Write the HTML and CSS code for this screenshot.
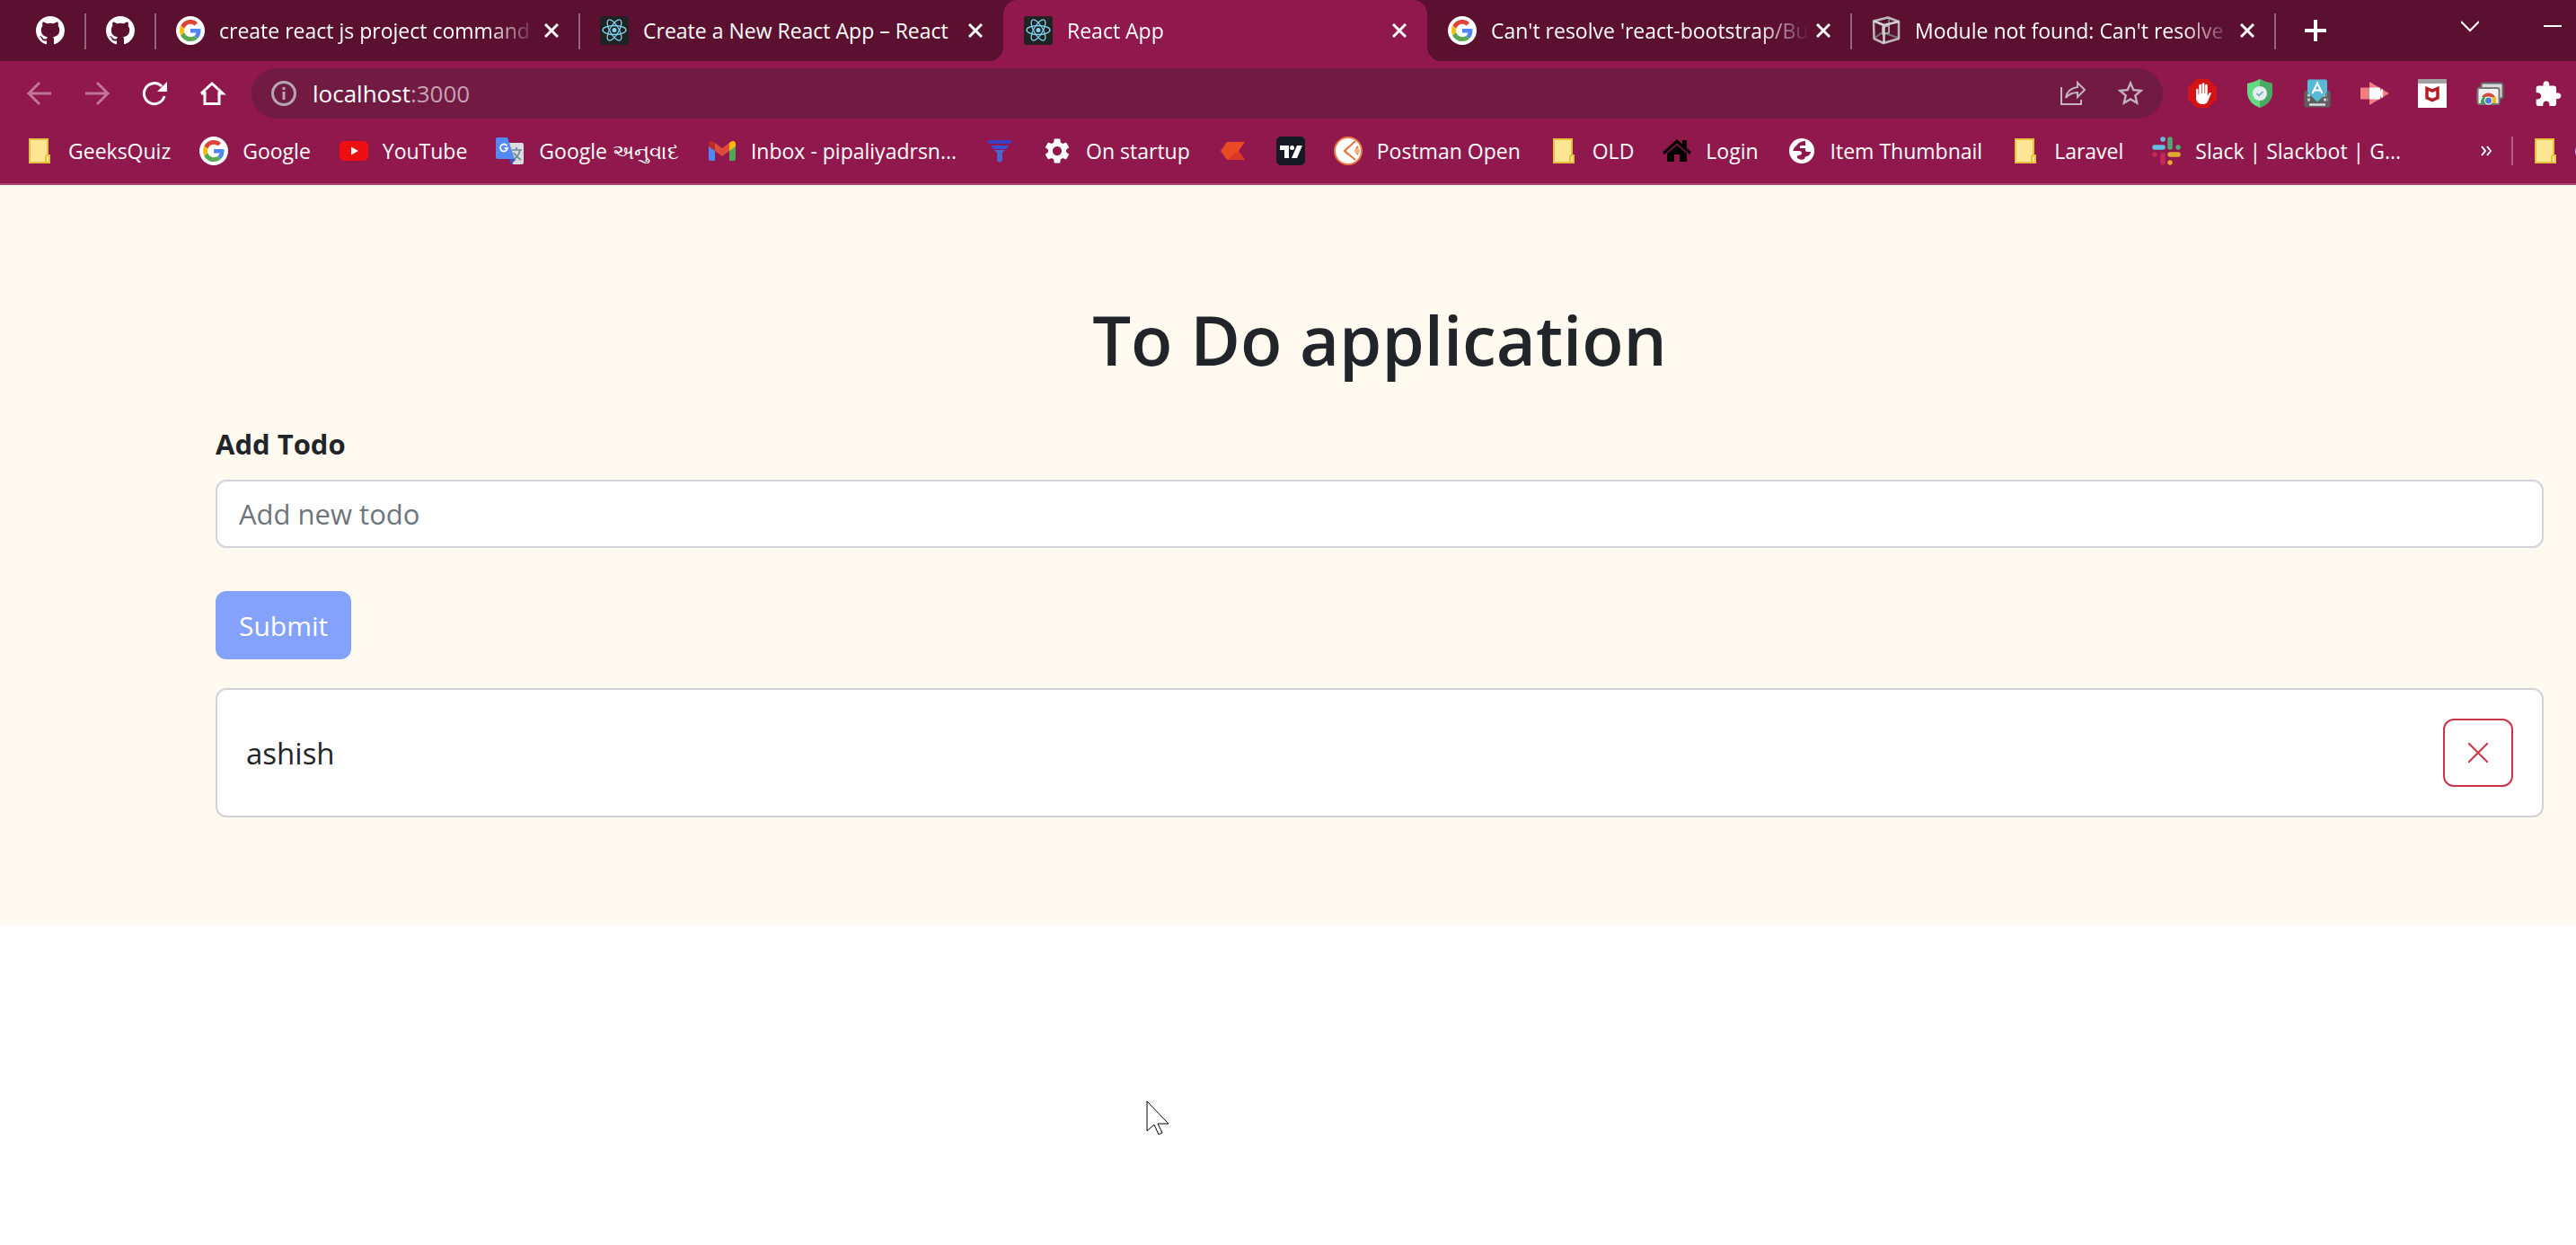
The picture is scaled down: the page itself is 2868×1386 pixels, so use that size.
FILE: index.html
```html
<!DOCTYPE html>
<html lang="en">
<head>
<meta charset="utf-8">
<title>React App</title>
<link rel="stylesheet" href="styles.css">
</head>
<body>
<svg class="sprite" aria-hidden="true">
  <symbol id="github" viewBox="0 0 16 16"><path fill="#fff" d="M8 0C3.58 0 0 3.58 0 8c0 3.54 2.29 6.53 5.47 7.59.4.07.55-.17.55-.38 0-.19-.01-.82-.01-1.49-2.01.37-2.53-.49-2.69-.94-.09-.23-.48-.94-.82-1.13-.28-.15-.68-.52-.01-.53.63-.01 1.08.58 1.23.82.72 1.21 1.87.87 2.33.66.07-.52.28-.87.51-1.07-1.78-.2-3.64-.89-3.64-3.95 0-.87.31-1.59.82-2.15-.08-.2-.36-1.02.08-2.12 0 0 .67-.21 2.2.82.64-.18 1.32-.27 2-.27.68 0 1.36.09 2 .27 1.53-1.04 2.2-.82 2.2-.82.44 1.1.16 1.92.08 2.12.51.56.82 1.27.82 2.15 0 3.07-1.87 3.75-3.65 3.95.29.25.54.73.54 1.48 0 1.07-.01 1.93-.01 2.2 0 .21.15.46.55.38A8.013 8.013 0 0016 8c0-4.42-3.58-8-8-8z"/></symbol>
  <symbol id="google" viewBox="0 0 64 64"><circle cx="32" cy="32" r="32" fill="#fff"/><g transform="translate(8 8)"><path fill="#dd4437" d="M24 9.5c3.54 0 6.71 1.22 9.21 3.6l6.85-6.85C35.9 2.38 30.47 0 24 0 14.62 0 6.51 5.38 2.56 13.22l7.98 6.19C12.43 13.72 17.74 9.5 24 9.5z"/><path fill="#5288f5" d="M46.98 24.55c0-1.57-.15-3.09-.38-4.55H24v9.02h12.94c-.58 2.96-2.26 5.48-4.78 7.18l7.73 6c4.51-4.18 7.09-10.36 7.09-17.65z"/><path fill="#f9bc06" d="M10.53 28.59c-.48-1.45-.76-2.99-.76-4.59s.27-3.14.76-4.59l-7.98-6.19C.92 16.46 0 20.12 0 24c0 3.88.92 7.54 2.56 10.78l7.97-6.19z"/><path fill="#57a952" d="M24 48c6.48 0 11.93-2.13 15.89-5.81l-7.73-6c-2.15 1.45-4.92 2.3-8.16 2.3-6.26 0-11.57-4.22-13.47-9.91l-7.98 6.19C6.51 42.62 14.62 48 24 48z"/></g></symbol>
  <symbol id="react" viewBox="0 0 32 32"><rect width="32" height="32" rx="3" fill="#222"/><g fill="none" stroke="#7ad4f2" stroke-width="1.3"><ellipse cx="16" cy="15.5" rx="13" ry="5"/><ellipse cx="16" cy="15.5" rx="13" ry="5" transform="rotate(60 16 15.5)"/><ellipse cx="16" cy="15.5" rx="13" ry="5" transform="rotate(120 16 15.5)"/></g><circle cx="16" cy="15.5" r="2.5" fill="#7ad4f2"/></symbol>
  <symbol id="cube" viewBox="0 0 32 32"><g fill="none" stroke-linejoin="round"><path d="M2 25l10-7 17 6M19 3v10" stroke="#747474" stroke-width="2"/><path d="M12 12l7-1.500v8l-7 1.500z" stroke="#a5a5a5" stroke-width="2"/><path d="M2 5.500L18 1.500l12 4.500v19L13 30 2.500 25z" stroke="#b9b9b9" stroke-width="2.500"/><path d="M2.500 5.500l11 4.500L30 6M13.500 10v20" stroke="#d2d2d2" stroke-width="2.500"/></g></symbol>
  <symbol id="close" viewBox="0 0 16 16"><path d="M1 1l14 14M15 1L1 15" stroke="#fff" stroke-width="3" fill="none"/></symbol>
  <symbol id="folder" viewBox="0 0 24 28"><path d="M1 1h20v18h2v8H1z" fill="#fce694" stroke="#e4c13f" stroke-width="2"/><path d="M19 27v-7q0-1 2-1" fill="none" stroke="#e4c13f" stroke-width="2"/></symbol>
</svg>

<header class="browser">
  <nav class="tabs" aria-label="Tabs">
    <a class="tab pinned" href="#"><svg class="icon"><use href="#github"/></svg></a>
    <a class="tab pinned" href="#"><svg class="icon"><use href="#github"/></svg></a>
    <div class="tab"><svg class="icon"><use href="#google"/></svg><a class="tab-title" href="#">create react js project command</a><button class="tab-close" aria-label="Close tab"><svg><use href="#close"/></svg></button></div>
    <div class="tab before-active"><svg class="icon"><use href="#react"/></svg><a class="tab-title short" href="#">Create a New React App – React</a><button class="tab-close" aria-label="Close tab"><svg><use href="#close"/></svg></button></div>
    <div class="tab active"><svg class="icon"><use href="#react"/></svg><a class="tab-title" href="#">React App</a><button class="tab-close" aria-label="Close tab"><svg><use href="#close"/></svg></button></div>
    <div class="tab"><svg class="icon"><use href="#google"/></svg><a class="tab-title" href="#">Can't resolve 'react-bootstrap/Bu</a><button class="tab-close" aria-label="Close tab"><svg><use href="#close"/></svg></button></div>
    <div class="tab"><svg class="icon"><use href="#cube"/></svg><a class="tab-title" href="#">Module not found: Can't resolve</a><button class="tab-close" aria-label="Close tab"><svg><use href="#close"/></svg></button></div>
    <button class="new-tab" aria-label="New tab"><svg viewBox="0 0 24 24"><path d="M12 0v24M0 12h24" stroke="#fff" stroke-width="4"/></svg></button>
    <div class="window-controls">
      <button aria-label="Search tabs"><svg viewBox="0 0 20 20"><path d="M0 5l10 10L20 5" fill="none" stroke="#fff" stroke-width="2"/></svg></button>
      <button aria-label="Minimize"><svg viewBox="0 0 20 20"><path d="M0 10h20" stroke="#fff" stroke-width="2"/></svg></button>
    </div>
  </nav>

  <div class="toolbar">
    <div class="nav-buttons">
      <button aria-label="Back" disabled><svg viewBox="0 0 32 32"><path d="M29 16H4M16 4L4 16l12 12" fill="none" stroke="#bf7696" stroke-width="3"/></svg></button>
      <button aria-label="Forward" disabled><svg viewBox="0 0 32 32"><path d="M3 16h25M16 4l12 12-12 12" fill="none" stroke="#bf7696" stroke-width="3"/></svg></button>
      <button aria-label="Reload"><svg viewBox="0 0 32 32"><path d="M27 19a11.500 11.500 0 1 1-3-11" fill="none" stroke="#fff" stroke-width="3"/><path d="M30 3v11H19z" fill="#fff"/></svg></button>
      <button aria-label="Home"><svg viewBox="0 0 32 32"><path d="M8 14v13.500h16V14M4 16L16 5l12 11H24M8 16H4" fill="none" stroke="#fff" stroke-width="3"/></svg></button>
    </div>
    <div class="address">
      <svg class="info" viewBox="0 0 28 28"><circle cx="14" cy="14" r="12.500" fill="none" stroke="#b7a7af" stroke-width="3"/><path d="M14 12v9M14 7v3" stroke="#b7a7af" stroke-width="3"/></svg>
      <div class="url" role="textbox" aria-label="Address">localhost<span class="port">:3000</span></div>
      <button aria-label="Share"><svg viewBox="0 0 32 32"><path d="M3 9v19h22v-5" fill="none" stroke="#c5b4bc" stroke-width="2"/><path d="M8 21C9 14 14 10 21 9V4l8 8-8 8v-5c-6 0-10 2-13 6z" fill="none" stroke="#c5b4bc" stroke-width="2"/></svg></button>
      <button aria-label="Bookmark this page"><svg viewBox="1 1 22 22"><path fill="#c5b4bc" d="M22 9.240l-7.190-.62L12 2 9.190 8.630 2 9.240l5.460 4.730L5.820 21 12 17.270 18.180 21l-1.630-7.030L22 9.240zM12 15.400l-3.760 2.270 1-4.280-3.320-2.880 4.380-.38L12 6.100l1.710 4.040 4.380.38-3.320 2.880 1 4.280L12 15.400z"/></svg></button>
    </div>
    <div class="extensions">
      <button aria-label="AdBlock"><svg viewBox="0 0 32 32"><path d="M9.500 0h13L32 9.500v13L22.500 32h-13L0 22.500v-13z" fill="#d41317"/><path d="M9 11.500q1.300-1.500 2.500 0V17h.8V6.500q1.400-1.700 2.700 0V16h.7V5q1.400-1.500 2.700 0v11h.7V6.500q1.400-1.500 2.600 0V19l1.500-3q1.500-1.500 2.800-.5L22 25q-1.500 3-5 3-7 0-8-6z" fill="#fff"/></svg></button>
      <button aria-label="Shield"><svg viewBox="0 0 32 32"><path d="M16 0q7 4 14 5v11q-1 11-14 16Q3 27 2 16V5Q9 4 16 0z" fill="#63d980"/><path d="M16 0q7 4 14 5v11q-1 11-14 16z" fill="#4aaa63"/><circle cx="16" cy="16" r="8" fill="#e3ecf1"/><path d="M12.500 16l2.500 2.500 4.500-4.500" fill="none" stroke="#78a0a5" stroke-width="1.500"/></svg></button>
      <button aria-label="Input tools"><svg viewBox="0 0 32 32"><rect x="1.500" y="13" width="29" height="18.500" rx="2" fill="#5e5e5e"/><path d="M5 18h3m3 0h2m9 0h5M5 23h4m14 0h5" stroke="#ccc" stroke-width="3" stroke-dasharray="3 1.500"/><path d="M7 28.500h18" stroke="#ddd" stroke-width="2.500"/><path d="M7 .5h18q2 0 2 2V15L16 25.500 5 15V2.500q0-2 2-2z" fill="#56bbd6"/><path d="M10.500 16L16 4.500 21.500 16M12.500 12.500h7" fill="none" stroke="#fff" stroke-width="2"/></svg></button>
      <button aria-label="Screen recorder"><svg viewBox="0 0 32 32"><path d="M0 9.500h10V3l22 13-22 13v-6.500H0z" fill="#ee8080"/><path d="M10 9.500h12v4l3-3v11l-3-3v4H10z" fill="#fff"/></svg></button>
      <button aria-label="McAfee"><svg viewBox="0 0 32 32"><path fill="#fff" d="M0 0h32v32H0z"/><path fill="#a3a0a1" d="M0 0h32v5H0z"/><path d="M10 10.500l6 2.700 6-2.700v10.300l-6 2.700-6-2.700z" fill="none" stroke="#b51d24" stroke-width="3.500"/></svg></button>
      <button aria-label="Image viewer"><svg viewBox="0 0 32 32"><rect x="6.500" y="4.500" width="24" height="17" rx="2" fill="#d9d9d9" stroke="#666" stroke-width="2"/><rect x="2.500" y="10" width="24" height="18" rx="2" fill="#f1f1f1" stroke="#777" stroke-width="2"/><path d="M6 27a8.500 8.500 0 0 1 4-8l4 8z" fill="#4a9b52"/><path d="M7 20a8.500 8.500 0 0 1 15 0z" fill="#cf4b3e"/><path d="M14 20h9v7h-9z" fill="#eeb925"/><circle cx="14.500" cy="24" r="4.500" fill="#fff"/><circle cx="14.500" cy="24" r="3.500" fill="#4a7ed9"/></svg></button>
      <button aria-label="Extensions"><svg viewBox="0 0 32 32"><path fill="#fff" transform="translate(1 1) scale(1.320)" d="M20.500 11H19V7c0-1.100-.9-2-2-2h-4V3.500C13 2.120 11.880 1 10.500 1S8 2.120 8 3.500V5H4c-1.100 0-1.990.9-1.990 2v3.800H3.500c1.490 0 2.700 1.210 2.700 2.700s-1.210 2.700-2.700 2.700H2V20c0 1.100.9 2 2 2h3.800v-1.500c0-1.490 1.210-2.700 2.700-2.700 1.490 0 2.700 1.210 2.700 2.700V22H17c1.100 0 2-.9 2-2v-4h1.500c1.380 0 2.500-1.120 2.500-2.500S21.880 11 20.500 11z"/></svg></button>
    </div>
  </div>

  <nav class="bookmarks" aria-label="Bookmarks">
    <a href="#"><svg class="icon folder"><use href="#folder"/></svg><span>GeeksQuiz</span></a>
    <a href="#"><svg class="icon"><use href="#google"/></svg><span>Google</span></a>
    <a href="#"><svg class="icon" viewBox="0 0 32 32"><rect y="5" width="32" height="22" rx="5" fill="#ee0f12"/><path d="M13 11.500l8 4.500-8 4.500z" fill="#fff"/></svg><span>YouTube</span></a>
    <a href="#"><svg class="icon" viewBox="0 0 32 32"><path d="M13 7h16q2 0 2 2v20q0 2-2 2H19z" fill="#dadce0"/><path d="M15 25h8l-6 6z" fill="#3a57b8"/><path d="M2 1h11l8 24H2q-2 0-2-2V3q0-2 2-2z" fill="#5389f1"/><path d="M12.500 10.500A4 4 0 1 0 13 13H9.500" fill="none" stroke="#fff" stroke-width="1.800"/><path d="M18 15h11M23 12v3m4 0q-2 8-7 10m0-7q3 5 8 8" fill="none" stroke="#6d8794" stroke-width="1.600"/></svg><span>Google <span lang="gu">અનુવાદ</span></span></a>
    <a href="#"><svg class="icon" viewBox="0 0 32 32"><path d="M1 10l7 5v12H3q-2 0-2-2z" fill="#4e87f3"/><path d="M31 10l-7 5v12h5q2 0 2-2z" fill="#50a956"/><path d="M24 7l2-1.500q5-2 5 3V11l-7 5z" fill="#f6bb0b"/><path d="M8 7L6 5.500q-5-2-5 3V11l7 5z" fill="#b92a25"/><path d="M8 7l8 6 8-6v9l-8 6-8-6z" fill="#df4b3e"/></svg><span>Inbox - pipaliyadrsn...</span></a>
    <a href="#" aria-label="T"><svg class="icon" viewBox="0 0 32 32"><path d="M2 4h28l-2 4H4z" fill="#3c3fc0"/><path d="M6 10h20l-3 4H9z" fill="#3a4fd6"/><path d="M10 15h12l-3 3v9l-3 2-3-2v-9z" fill="#4c66d0"/></svg></a>
    <a href="#"><svg class="icon" viewBox="0 0 32 32"><path fill="#fff" fill-rule="evenodd" transform="translate(-.8 -.8) scale(1.400)" d="M19.140 12.940c.04-.3.060-.61.060-.94 0-.32-.02-.64-.07-.94l2.030-1.580c.18-.14.230-.41.120-.61l-1.920-3.320c-.12-.22-.37-.29-.59-.22l-2.390.96c-.5-.38-1.030-.7-1.620-.94l-.36-2.540c-.04-.24-.24-.41-.48-.41h-3.840c-.24 0-.43.170-.47.410l-.36 2.540c-.59.240-1.130.570-1.620.940l-2.390-.96c-.22-.08-.47 0-.59.220L2.740 8.870c-.12.210-.08.470.12.610l2.030 1.580c-.05.3-.09.630-.09.940s.02.640.07.940l-2.030 1.580c-.18.140-.23.410-.12.610l1.920 3.320c.12.220.37.290.59.220l2.390-.96c.5.380 1.030.7 1.620.94l.36 2.540c.05.240.24.410.48.410h3.840c.24 0 .44-.17.470-.41l.36-2.540c.59-.24 1.130-.56 1.620-.94l2.390.96c.22.080.47 0 .59-.22l1.920-3.320c.12-.22.070-.47-.12-.61l-2.010-1.580zM12 15.600c-1.980 0-3.600-1.620-3.600-3.600s1.620-3.600 3.600-3.600 3.600 1.620 3.600 3.600-1.620 3.600-3.600 3.600z"/></svg><span>On startup</span></a>
    <a href="#" aria-label="Kite"><svg class="icon" viewBox="0 0 32 32"><path d="M9 6h20l-7 10 7 10H9L2 16z" fill="#ea4a23"/><path d="M22 16l7 10H9z" fill="#d8372c"/></svg></a>
    <a href="#" aria-label="TradingView"><svg class="icon" viewBox="0 0 32 32"><rect width="32" height="32" rx="5" fill="#151924"/><path d="M4 10h10v14H9v-9H4z" fill="#fff"/><circle cx="17.500" cy="12.500" r="2.500" fill="#fff"/><path d="M23 10h6l-6 14h-6z" fill="#fff"/></svg></a>
    <a href="#"><svg class="icon" viewBox="0 0 32 32"><circle cx="16" cy="16" r="15" fill="#fff" stroke="#e87a43" stroke-width="2"/><path d="M24 5L12 16l4 4M16 12l-4 4 12 10M27 11q-5 5 0 9" fill="none" stroke="#e4703a" stroke-width="2"/><circle cx="26" cy="16" r="3" fill="#f3b393"/></svg><span>Postman Open</span></a>
    <a href="#"><svg class="icon folder"><use href="#folder"/></svg><span>OLD</span></a>
    <a href="#"><svg class="icon" viewBox="0 0 32 32"><path d="M16 3l6 5.500V4h5v9l5 4.500-2 2.500L16 7.500 2 20l-2-2.500z" fill="#000"/><path d="M16 9.500l11 9.500v9h-8v-8h-6v8H5v-9z" fill="#000"/></svg><span>Login</span></a>
    <a href="#"><svg class="icon" viewBox="0 0 32 32"><circle cx="16" cy="16" r="14" fill="#fff"/><path d="M20 5q-6 0-9 4-4 3-5 7h7q3 0 3 3-1 2-5 2v3q4 3 8 1 0-3 3-3 4-2 4-5h-4q-2 0-2-2v-2h-6q-1-3 2-3h4z" fill="#91184c"/></svg><span>Item Thumbnail</span></a>
    <a href="#"><svg class="icon folder"><use href="#folder"/></svg><span>Laravel</span></a>
    <a href="#"><svg class="icon" viewBox="0 0 32 32"><g stroke-width="5.500" stroke-linecap="round"><path d="M12 3h.1M3 12h9" stroke="#65bfe2"/><path d="M20 3v9M29 12h.1" stroke="#50a975"/><path d="M29 20h-9M20 29v.1" stroke="#deab35"/><path d="M3 20h.1M12 20v9" stroke="#c12853"/></g></svg><span>Slack | Slackbot | G...</span></a>
    <button class="more" aria-label="More bookmarks"><svg viewBox="0 0 12 12"><path d="M1 1l4 5-4 5M7 1l4 5-4 5" fill="none" stroke="#fff" stroke-width="2"/></svg></button>
    <a class="other" href="#"><svg class="icon folder"><use href="#folder"/></svg><span>O</span></a>
  </nav>
</header>

<main class="app">
  <h1 class="app-title">To Do application</h1>
  <form class="todo-form">
    <label class="form-label" for="todo">Add Todo</label>
    <input class="form-control" id="todo" type="text" placeholder="Add new todo">
    <button class="submit" type="submit" disabled>Submit</button>
  </form>
  <ul class="todo-list">
    <li class="todo">
      <span>ashish</span>
      <button class="delete" aria-label="Delete ashish"><svg viewBox="0 0 22 22"><path d="M0 0l22 22M22 0L0 22" stroke="#cc3549" stroke-width="2"/></svg></button>
    </li>
  </ul>
</main>
<svg class="pointer" viewBox="0 0 26 40" aria-hidden="true"><path d="M1 1v33l8-7 5 11 4-2-5-10h12z" fill="#fff" stroke="#000"/></svg>
</body>
</html>
```
FILE: styles.css
```css
* { box-sizing: border-box; }

body {
  margin: 0;
  background: #fff;
  color: #212529;
  font-family: "Open Sans", "Noto Sans", sans-serif;
  overflow-x: hidden;
}

button {
  margin: 0;
  padding: 0;
  border: 0;
  background: none;
  font: inherit;
}

a { color: inherit; text-decoration: none; }
.sprite { display: none; }
.icon { flex: none; width: 32px; height: 32px; }

.browser {
  background: #91184c;
  border-bottom: 2px solid #a9476f;
  color: #fff;
  font-size: 23px;
  line-height: 32px;
  overflow: hidden;
}

/* Tab strip */
.tabs {
  display: flex;
  height: 68px;
  padding-left: 17px;
  background: #5c1030;
}

.tab {
  position: relative;
  display: flex;
  flex: 0 0 472px;
  align-items: center;
  min-width: 0;
  padding: 0 15px 0 23px;
}

.tab.pinned { flex-basis: 78px; }

.tab::after {
  content: "";
  position: absolute;
  top: 15px;
  right: -1px;
  width: 2px;
  height: 40px;
  background: #95637a;
}

.tab.before-active::after { display: none; }

.tab.active {
  background: #91184c;
  border-radius: 16px 16px 0 0;
}

.tab.active::before,
.tab.active::after {
  content: "";
  position: absolute;
  top: auto;
  bottom: 0;
  width: 16px;
  height: 16px;
}

.tab.active::before {
  left: -16px;
  background: radial-gradient(circle at 0 0, transparent 16px, #91184c 16px);
}

.tab.active::after {
  right: -16px;
  background: radial-gradient(circle at 100% 0, transparent 16px, #91184c 16px);
}

.tab-title {
  flex: 1 1 0;
  min-width: 0;
  margin: 0 0 0 16px;
  overflow: hidden;
  white-space: nowrap;
  mask-image: linear-gradient(to right, #000 calc(100% - 56px), transparent);
}

.tab-title.short { mask-image: none; }

.tab-close {
  display: grid;
  flex: none;
  place-items: center;
  width: 32px;
  height: 32px;
}

.tab-close svg { width: 16px; height: 16px; }
.new-tab { display: grid; place-items: center; width: 90px; }
.new-tab svg { width: 24px; height: 24px; }

.window-controls {
  display: flex;
  align-items: flex-start;
  gap: 72px;
  margin-left: auto;
  padding: 19px 16px 0 0;
}

.window-controls svg { display: block; width: 20px; height: 20px; }

/* Address row */
.toolbar {
  display: flex;
  align-items: center;
  padding: 8px 16px 0 28px;
}

.toolbar button { width: 32px; height: 32px; }
.toolbar svg { display: block; width: 32px; height: 32px; }

.nav-buttons,
.extensions {
  display: flex;
  gap: 32px;
}

.address {
  display: flex;
  flex: 1;
  align-items: center;
  height: 56px;
  margin: 0 28px;
  padding: 0 20px 0 22px;
  border-radius: 28px;
  background: #711a42;
}

.address .info { width: 28px; height: 28px; }

.url {
  flex: 1;
  margin-left: 18px;
  font-size: 26px;
}

.port { color: #c6a3b3; }
.address button + button { margin-left: 32px; }

/* Bookmarks */
.bookmarks {
  display: flex;
  align-items: center;
  gap: 32px;
  height: 72px;
  padding-left: 28px;
  white-space: nowrap;
}

.bookmarks a {
  display: flex;
  flex: none;
  gap: 16px;
}

.icon.folder { padding: 2px 4px; }
.more { margin-left: auto; }
.more svg { display: block; width: 12px; height: 12px; }

.bookmarks .other {
  width: 72px;
  margin-left: -10px;
  padding-left: 20px;
  border-left: 2px solid #b35f85;
  overflow: hidden;
}

/* To-do page */
.app {
  padding: 124px 36px 120px 240px;
  background: #fffaef;
}

.app-title {
  margin: 0 0 44px;
  font-size: 76px;
  font-weight: 600;
  line-height: 96px;
  text-align: center;
}

.form-label {
  display: block;
  margin-bottom: 16px;
  font-size: 31px;
  font-weight: 700;
  line-height: 48px;
}

.form-control {
  display: block;
  width: 100%;
  height: 76px;
  padding: 12px 24px;
  border: 2px solid #ced4da;
  border-radius: 12px;
  background: #fff;
  color: inherit;
  font: inherit;
  font-size: 31px;
}

.form-control::placeholder { color: #6c757d; opacity: 1; }

.submit {
  height: 76px;
  margin-top: 48px;
  padding: 0 26px;
  border-radius: 12px;
  background: #84a2fb;
  color: #fff;
  font-size: 30px;
}

.todo-list { margin: 32px 0 0; padding: 0; list-style: none; }

.todo {
  display: flex;
  align-items: center;
  justify-content: space-between;
  padding: 32px;
  border: 2px solid #d0d2d5;
  border-radius: 12px;
  background: #fff;
  font-size: 33px;
}

.delete {
  display: grid;
  place-items: center;
  width: 78px;
  height: 76px;
  border: 2px solid #cc3549;
  border-radius: 12px;
}

.delete svg { width: 22px; height: 22px; }

.pointer {
  position: absolute;
  top: 1225px;
  left: 1276px;
  width: 26px;
  height: 40px;
}
```
